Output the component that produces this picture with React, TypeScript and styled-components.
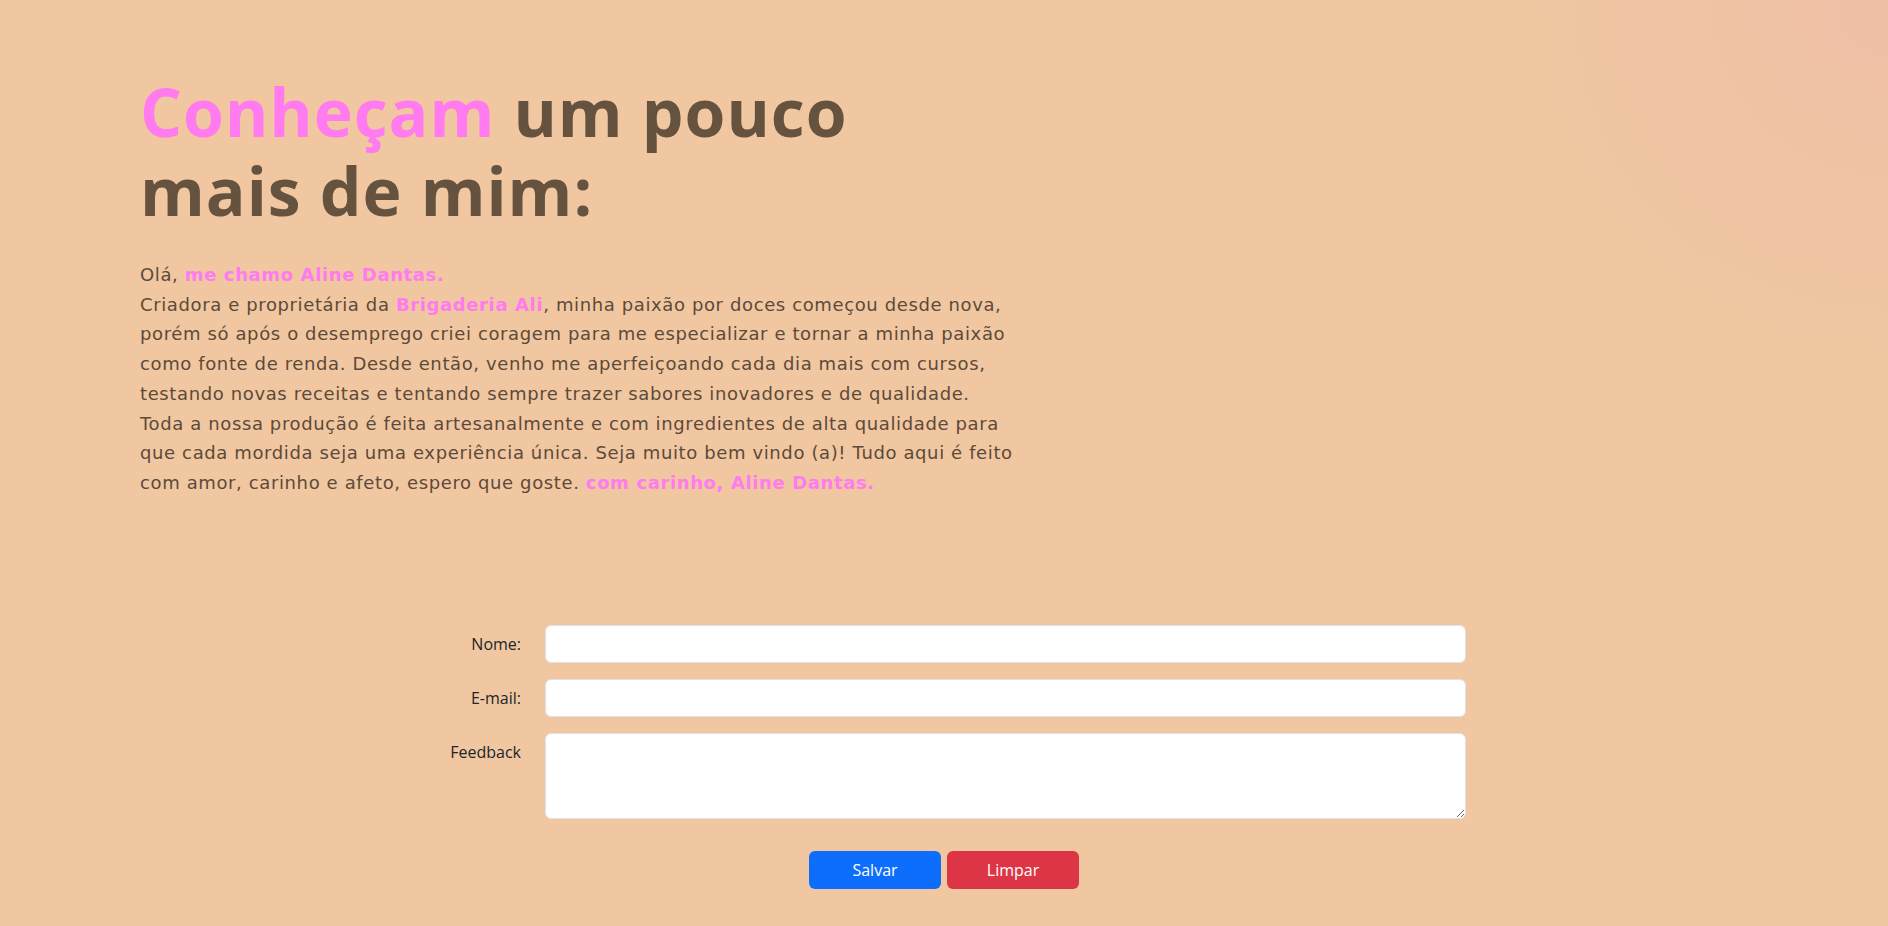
import React from 'react';
import styled, { createGlobalStyle } from 'styled-components';

const GlobalStyle = createGlobalStyle`
  * {
    box-sizing: border-box;
  }
  body {
    margin: 0;
    font-family: 'DejaVu Sans', 'Open Sans', sans-serif;
    background-color: #f0c7a0;
    background-image: radial-gradient(circle at 100% 0%, #efbfa6 0%, rgba(240, 199, 160, 0) 420px);
    background-repeat: no-repeat;
    min-height: 100vh;
  }
`;

const Page = styled.main`
  min-height: 100vh;
  padding: 72px 0 38px;
`;

const About = styled.section`
  padding-left: 140px;
  width: 1060px;
`;

const Title = styled.h1`
  margin: 0 0 30px;
  max-width: 780px;
  font-family: 'Open Sans', sans-serif;
  font-size: 66px;
  font-weight: 700;
  line-height: 79px;
  letter-spacing: 1px;
  color: #66533f;
`;

const Pink = styled.span<{ $bold?: boolean }>`
  color: #ff7bef;
  font-weight: ${(p) => (p.$bold ? 700 : 'inherit')};
`;

const Text = styled.p`
  margin: 0;
  font-size: 18px;
  line-height: 29.7px;
  letter-spacing: 0.62px;
  color: #5d4a3a;
`;

const Form = styled.form`
  width: 1068px;
  margin: 127px auto 0;
`;

const Row = styled.div`
  display: grid;
  grid-template-columns: 123px 1fr;
  margin-bottom: 16px;
`;

const Label = styled.label`
  padding: 7px 12px 0 0;
  text-align: right;
  font-family: 'Open Sans', sans-serif;
  font-size: 16px;
  line-height: 24px;
  color: #212529;
`;

const Field = styled.div`
  padding: 0 12px;
`;

const Input = styled.input`
  display: block;
  width: 100%;
  height: 38px;
  padding: 6px 12px;
  font: inherit;
  font-size: 16px;
  border: 1px solid #dee2e6;
  border-radius: 6px;
  background: #fff;
  outline: none;
`;

const TextArea = styled.textarea`
  display: block;
  width: 100%;
  height: 86px;
  padding: 6px 12px;
  font: inherit;
  font-size: 16px;
  border: 1px solid #dee2e6;
  border-radius: 6px;
  background: #fff;
  outline: none;
`;

const Actions = styled.div`
  display: flex;
  justify-content: center;
  gap: 6px;
  margin-top: 32px;
`;

const Button = styled.button<{ $variant: 'primary' | 'danger' }>`
  width: 132px;
  height: 38px;
  border: none;
  border-radius: 6px;
  font-family: 'Open Sans', sans-serif;
  font-size: 16px;
  color: #fff;
  cursor: pointer;
  background-color: ${(p) => (p.$variant === 'primary' ? '#0d6efd' : '#dc3545')};
`;

export default function App() {
  return (
    <>
      <GlobalStyle />
      <Page>
        <About>
          <Title>
            <Pink>Conheçam</Pink> um pouco mais de mim:
          </Title>
          <Text>
            Olá, <Pink $bold>me chamo Aline Dantas.</Pink>
            <br />
            Criadora e proprietária da <Pink $bold>Brigaderia Ali</Pink>, minha paixão por doces começou desde nova,
            <br />
            porém só após o desemprego criei coragem para me especializar e tornar a minha paixão
            <br />
            como fonte de renda. Desde então, venho me aperfeiçoando cada dia mais com cursos,
            <br />
            testando novas receitas e tentando sempre trazer sabores inovadores e de qualidade.
            <br />
            Toda a nossa produção é feita artesanalmente e com ingredientes de alta qualidade para
            <br />
            que cada mordida seja uma experiência única. Seja muito bem vindo (a)! Tudo aqui é feito
            <br />
            com amor, carinho e afeto, espero que goste. <Pink $bold>com carinho, Aline Dantas.</Pink>
          </Text>
        </About>

        <Form onSubmit={(e) => e.preventDefault()}>
          <Row>
            <Label htmlFor="nome">Nome:</Label>
            <Field>
              <Input id="nome" type="text" />
            </Field>
          </Row>
          <Row>
            <Label htmlFor="email">E-mail:</Label>
            <Field>
              <Input id="email" type="email" />
            </Field>
          </Row>
          <Row>
            <Label htmlFor="feedback">Feedback</Label>
            <Field>
              <TextArea id="feedback" />
            </Field>
          </Row>
          <Actions>
            <Button type="submit" $variant="primary">
              Salvar
            </Button>
            <Button type="reset" $variant="danger">
              Limpar
            </Button>
          </Actions>
        </Form>
      </Page>
    </>
  );
}
